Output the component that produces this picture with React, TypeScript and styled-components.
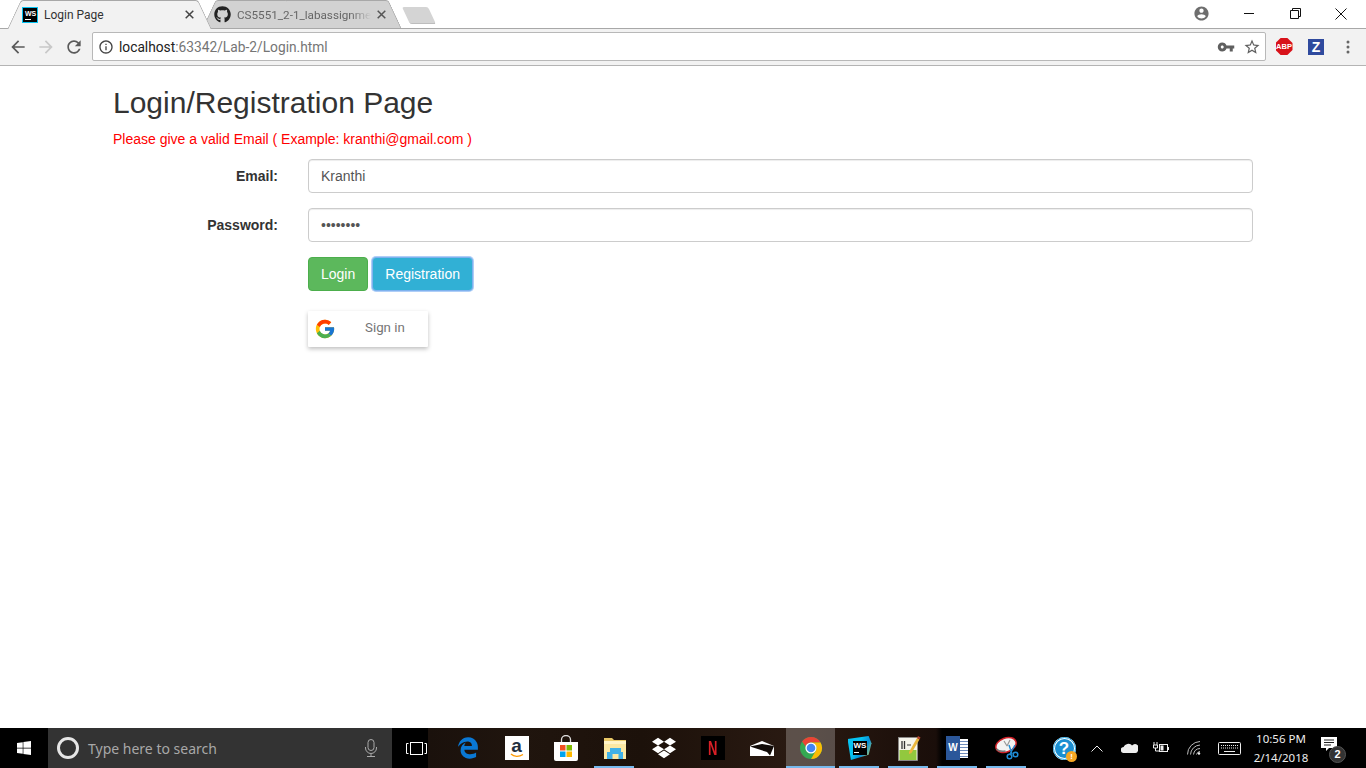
import React from 'react'
import styled, {createGlobalStyle} from 'styled-components'
import {FaDropbox, FaEdgeLegacy, FaGithub, FaWindows} from 'react-icons/fa'
import {FcGoogle} from 'react-icons/fc'

const GlobalStyle = createGlobalStyle`
  html, body {
    margin: 0;
    padding: 0;
    height: 100%;
    overflow: hidden;
    background: #fff;
  }
  * {
    box-sizing: border-box;
  }
`

const Screen = styled.div`
  width: 1366px;
  height: 768px;
  display: flex;
  flex-direction: column;
  font-family: 'Liberation Sans', Arial, sans-serif;
  color: #333;
`

/* browser chrome */
const TitleBar = styled.div`
  height: 29px;
  flex: none;
  display: flex;
  background: #fff;
  border-bottom: 1px solid #a8a8a8;
  padding-left: 14px;
  font-family: Roboto, sans-serif;
  font-size: 12px;
`

const Tab = styled.div<{$active?: boolean}>`
  position: relative;
  flex: none;
  width: ${p => (p.$active ? 191 : 186)}px;
  height: ${p => (p.$active ? 29 : 28)}px;
  margin-left: ${p => (p.$active ? 0 : 4)}px;
  padding: 0 ${p => (p.$active ? 11 : 12)}px 0 ${p => (p.$active ? 8 : 5)}px;
  display: flex;
  align-items: center;
  gap: 6px;
  color: ${p => (p.$active ? '#333' : '#666')};
  z-index: ${p => (p.$active ? 2 : 1)};

  &::before,
  &::after {
    content: '';
    position: absolute;
    top: 0;
    bottom: 0;
    width: 55%;
    z-index: -1;
    background: ${p => (p.$active ? '#f2f2f2' : '#d2d2d2')};
    border-top: 1px solid #a8a8a8;
  }
  &::before {
    left: 0;
    border-left: 1px solid #a8a8a8;
    border-top-left-radius: 3px;
    transform: skewX(-25deg);
  }
  &::after {
    right: 0;
    border-right: 1px solid #a8a8a8;
    border-top-right-radius: 3px;
    transform: skewX(25deg);
  }
`

const TabTitle = styled.span<{$fade?: boolean}>`
  flex: 1;
  white-space: nowrap;
  padding-top: 1px;
  line-height: 28px;
  ${p =>
    p.$fade &&
    `font-size: 11.7px;
     mask-image: linear-gradient(to right, #000 85%, transparent 100%);`}
`

const TabClose = styled.svg`
  width: 9px;
  height: 9px;
  flex: none;
`

const WsFavicon = styled.span`
  width: 16px;
  height: 16px;
  flex: none;
  background: #000;
  border: 1px solid #07c3f2;
  color: #fff;
  font: bold 7px/9px 'Liberation Sans', sans-serif;
  padding: 1px 0 0 2px;
  position: relative;

  &::after {
    content: '';
    position: absolute;
    left: 2px;
    bottom: 2px;
    width: 6px;
    height: 1px;
    background: #fff;
  }
`

const NewTab = styled.div`
  flex: none;
  width: 26px;
  height: 17px;
  margin: 7px 0 0 11px;
  background: #d4d4d4;
  border-bottom: 1px solid #bdbdbd;
  border-radius: 2px;
  transform: skewX(25deg);
`

const WindowControls = styled.div`
  margin-left: auto;
  display: flex;
  align-items: center;
  height: 27px;
  color: #111;
`

const WindowButton = styled.div<{$width: number}>`
  width: ${p => p.$width}px;
  height: 26px;
  display: flex;
  align-items: center;
  justify-content: center;
`

const Toolbar = styled.div`
  height: 37px;
  flex: none;
  display: flex;
  align-items: center;
  background: #f2f2f2;
  border-bottom: 1px solid #b4b4b4;
  padding: 0 0 1px 4px;
`

const NavButton = styled.div`
  width: 28px;
  height: 28px;
  flex: none;
  display: flex;
  align-items: center;
  justify-content: center;
`

const AddressBar = styled.div`
  width: 1174px;
  height: 29px;
  flex: none;
  margin: 0 2px 0 4px;
  display: flex;
  align-items: center;
  background: #fff;
  border: 1px solid #b8b8b8;
  border-radius: 2px;
  padding: 0 4px 0 5px;
  font-family: Roboto, sans-serif;
  font-size: 13.75px;
`

const UrlHost = styled.span`
  margin-left: 5px;
  color: #222;
`

const UrlPath = styled.span`
  color: #757575;
`

const AddressIcons = styled.div`
  margin-left: auto;
  display: flex;
  align-items: center;
  gap: 8px;
`

const ExtensionSlot = styled.div`
  width: 32px;
  height: 28px;
  flex: none;
  display: flex;
  align-items: center;
  justify-content: center;
`

const AbpBadge = styled.span`
  width: 17px;
  height: 17px;
  background: #d8121a;
  color: #fff;
  clip-path: polygon(30% 0, 70% 0, 100% 30%, 100% 70%, 70% 100%, 30% 100%, 0 70%, 0 30%);
  font: bold 7.5px/17px 'Liberation Sans', sans-serif;
  text-align: center;
`

const ZBadge = styled.span`
  width: 16px;
  height: 16px;
  background: #2f4a9e;
  color: #fff;
  font: bold 14px/16px 'Liberation Sans', sans-serif;
  text-align: center;
`

/* page content */
const Page = styled.main`
  flex: 1;
  background: #fff;
  padding: 20px 113px 0;
`

const Heading = styled.h1`
  margin: 0 0 10px;
  font-size: 30px;
  font-weight: 400;
  line-height: 33px;
  color: #333;
`

const ErrorText = styled.div`
  margin-bottom: 10px;
  font-size: 14px;
  line-height: 20px;
  color: #f00;
`

const FormRow = styled.div<{$gap?: number}>`
  display: grid;
  grid-template-columns: 165px 945px;
  column-gap: 30px;
  margin-bottom: ${p => p.$gap ?? 15}px;
`

const Label = styled.label`
  font-size: 14px;
  font-weight: 700;
  line-height: 20px;
  padding-top: 7px;
  text-align: right;
  color: #333;
`

const Input = styled.input`
  width: 100%;
  height: 34px;
  padding: 6px 12px;
  background: #fff;
  border: 1px solid #ccc;
  border-radius: 4px;
  box-shadow: inset 0 1px 1px rgba(0, 0, 0, 0.075);
  font-family: 'Liberation Sans', Arial, sans-serif;
  font-size: 14px;
  color: #555;
  outline: none;
`

const ButtonRow = styled.div`
  grid-column: 2;
  display: flex;
  gap: 4px;
`

const Button = styled.button<{$color: string; $edge: string; $focused?: boolean}>`
  height: 34px;
  padding: 6px 12px;
  background: ${p => p.$color};
  border: 1px solid ${p => p.$edge};
  border-radius: 4px;
  box-shadow: ${p => (p.$focused ? '0 0 0 1px rgba(110, 165, 240, 0.55)' : 'none')};
  color: #fff;
  font-family: 'Liberation Sans', Arial, sans-serif;
  font-size: 14px;
  line-height: 20px;
`

const GoogleButton = styled.button`
  grid-column: 2;
  width: 120px;
  height: 36px;
  display: flex;
  align-items: center;
  padding: 0 0 1px 6px;
  background: #fff;
  border: none;
  border-radius: 1px;
  box-shadow: 0 2px 4px rgba(0, 0, 0, 0.25);
  color: #757575;
  font-family: Roboto, sans-serif;
  font-size: 13.3px;
  font-weight: 400;
`

const GoogleLabel = styled.span`
  margin: 0 0 3px 29px;
`

/* windows taskbar */
const Taskbar = styled.footer`
  height: 40px;
  flex: none;
  display: flex;
  background: #000;
  font-family: 'Noto Sans', sans-serif;
`

const StartButton = styled.div`
  width: 48px;
  display: flex;
  align-items: center;
  justify-content: center;
  color: #fff;
`

const SearchBox = styled.div`
  width: 344px;
  display: flex;
  align-items: center;
  background: #333;
  padding: 0 14px 0 9px;
  color: #a8a8a8;
  font-size: 14px;
`

const CortanaRing = styled.span`
  width: 22px;
  height: 22px;
  border: 3px solid #e6e6e6;
  border-radius: 50%;
  margin-right: 9px;
`

const TaskView = styled.div`
  width: 36px;
  padding-left: 12px;
  display: flex;
  align-items: center;
  justify-content: center;
`

const AppStrip = styled.div`
  width: 612px;
  display: flex;
  padding-left: 15px;
  background: linear-gradient(
    to right,
    #1a110c 0,
    #20150e 15%,
    #1c110a 35%,
    #2a1a12 60%,
    #1d100b 78%,
    #1a0e0a 83%,
    #000 84%
  );
`

const AppSlot = styled.div<{$open?: boolean; $current?: boolean}>`
  position: relative;
  width: 49px;
  flex: none;
  display: flex;
  align-items: center;
  justify-content: center;
  background: ${p => (p.$current ? 'rgba(255,255,255,0.24)' : 'transparent')};

  &::after {
    content: '';
    display: ${p => (p.$open ? 'block' : 'none')};
    position: absolute;
    bottom: 0;
    left: ${p => (p.$current ? 0 : 4)}px;
    right: ${p => (p.$current ? 0 : 5)}px;
    height: 2px;
    background: #76b9ed;
  }
`

const AmazonTile = styled.span`
  position: relative;
  width: 24px;
  height: 24px;
  display: flex;
  justify-content: center;
  background: #fff;
  color: #232f3e;
  font: bold 19px/20px 'Liberation Sans', sans-serif;
`

const AmazonSmile = styled.svg`
  position: absolute;
  left: 5px;
  bottom: 2px;
`

const NetflixTile = styled.span`
  width: 24px;
  height: 24px;
  display: flex;
  align-items: center;
  justify-content: center;
  background: #000;
  color: #d81f26;
`

const NetflixLetter = styled.span`
  font: bold 21px/24px 'Liberation Sans', sans-serif;
  transform: scaleX(0.62);
`

const WsLogo = styled.span`
  width: 24px;
  height: 24px;
  display: flex;
  align-items: center;
  justify-content: center;
  background: linear-gradient(120deg, #07c3f2 40%, #078fd8 62%, #e8e24a 100%);
  clip-path: polygon(0 12%, 88% 0, 100% 30%, 88% 78%, 14% 100%);
`

const WsBox = styled.span`
  position: relative;
  width: 14px;
  height: 14px;
  background: #000;
  color: #fff;
  font: bold 8px/9px 'Liberation Sans', sans-serif;
  padding-left: 1px;

  &::after {
    content: '';
    position: absolute;
    left: 1px;
    bottom: 2px;
    width: 5px;
    height: 1px;
    background: #fff;
  }
`

const WordDoc = styled.span`
  width: 23px;
  height: 24px;
  display: flex;
  align-items: center;
`

const WordCover = styled.span`
  width: 14px;
  height: 24px;
  background: #2b579a;
  color: #fff;
  font: bold 10px/24px 'Liberation Sans', sans-serif;
  text-align: center;
`

const WordPage = styled.span`
  width: 8px;
  height: 19px;
  background: repeating-linear-gradient(#fff 0 2px, #6f8cbb 2px 3px);
`

const Tray = styled.div`
  flex: 1;
  display: flex;
  color: #fff;
`

const TraySlot = styled.div<{$width: number; $left?: number}>`
  position: relative;
  width: ${p => p.$width}px;
  margin-left: ${p => p.$left ?? 0}px;
  flex: none;
  display: flex;
  align-items: center;
  justify-content: center;
`

const Clock = styled.div`
  width: 66px;
  flex: none;
  text-align: center;
  font-size: 11.5px;
  line-height: 19px;
  color: #eee;
  padding-top: 1px;
`

const HelpBadge = styled.span`
  position: absolute;
  right: 11px;
  bottom: 6px;
  width: 11px;
  height: 11px;
  background: #f5a623;
  border-radius: 50%;
  color: #fff;
  font: bold 8px/11px 'Liberation Sans', sans-serif;
  text-align: center;
`

const HelpCircle = styled.span`
  width: 23px;
  height: 23px;
  background: #1b8fd2;
  border: 2px solid #fff;
  outline: 1px solid #1ba1e2;
  outline-offset: -1px;
  border-radius: 50%;
  color: #fff;
  font: bold 17px/19px 'Liberation Sans', sans-serif;
  text-align: center;
`

const NotifyCount = styled.span`
  position: absolute;
  right: 6px;
  bottom: 5px;
  width: 17px;
  height: 17px;
  background: #333;
  border: 1px solid #555;
  border-radius: 50%;
  color: #fff;
  font: bold 11px/15px 'Liberation Sans', sans-serif;
  text-align: center;
`

const CloseGlyph = ({color = '#444'}: {color?: string}) => (
  <TabClose viewBox='0 0 9 9'>
    <path d='M.7.7l7.6 7.6M8.3.7L.7 8.3' stroke={color} strokeWidth='1.5' fill='none' />
  </TabClose>
)

const MaterialIcon = ({d, size = 20, color = '#5a5a5a'}: {d: string; size?: number; color?: string}) => (
  <svg width={size} height={size} viewBox='0 0 24 24' fill={color}>
    <path d={d} />
  </svg>
)

const ARROW_LEFT = 'M20 11H7.83l5.59-5.59L12 4l-8 8 8 8 1.41-1.41L7.83 13H20v-2z'
const ARROW_RIGHT = 'M12 4l-1.41 1.41L16.17 11H4v2h12.17l-5.58 5.59L12 20l8-8z'
const RELOAD =
  'M17.65 6.35C16.2 4.9 14.21 4 12 4c-4.42 0-7.99 3.58-7.99 8s3.57 8 7.99 8c3.73 0 6.84-2.55 7.73-6h-2.08c-.82 2.33-3.04 4-5.65 4-3.31 0-6-2.69-6-6s2.69-6 6-6c1.66 0 3.14.69 4.22 1.78L13 11h7V4l-2.35 2.35z'
const INFO =
  'M11 7h2v2h-2zm0 4h2v6h-2zm1-9C6.48 2 2 6.48 2 12s4.48 10 10 10 10-4.48 10-10S17.52 2 12 2zm0 18c-4.41 0-8-3.59-8-8s3.59-8 8-8 8 3.59 8 8-3.59 8-8 8z'
const KEY =
  'M12.65 10C11.83 7.67 9.61 6 7 6c-3.31 0-6 2.69-6 6s2.69 6 6 6c2.61 0 4.83-1.67 5.65-4H17v4h4v-4h2v-4H12.65zM7 14c-1.1 0-2-.9-2-2s.9-2 2-2 2 .9 2 2-.9 2-2 2z'
const STAR =
  'M22 9.24l-7.19-.62L12 2 9.19 8.63 2 9.24l5.46 4.73L5.82 21 12 17.27 18.18 21l-1.63-7.03L22 9.24zM12 15.4l-3.76 2.27 1-4.28-3.32-2.88 4.38-.38L12 6.1l1.71 4.04 4.38.38-3.32 2.88 1 4.28L12 15.4z'
const ACCOUNT =
  'M12 2C6.48 2 2 6.48 2 12s4.48 10 10 10 10-4.48 10-10S17.52 2 12 2zm0 3c1.66 0 3 1.34 3 3s-1.34 3-3 3-3-1.34-3-3 1.34-3 3-3zm0 14.2c-2.5 0-4.71-1.28-6-3.22.03-1.99 4-3.08 6-3.08 1.99 0 5.97 1.09 6 3.08-1.29 1.94-3.5 3.22-6 3.22z'

const StoreIcon = () => (
  <svg width='24' height='26' viewBox='0 0 24 26'>
    <path d='M7.5 7V4.5a4.5 4 0 0 1 9 0V7' fill='none' stroke='#ddd' strokeWidth='1.3' />
    <path d='M0 7h24v17a2 2 0 0 1-2 2H2a2 2 0 0 1-2-2z' fill='#fff' />
    <rect x='6' y='10' width='5.5' height='5.5' fill='#f25022' />
    <rect x='12.5' y='10' width='5.5' height='5.5' fill='#7fba00' />
    <rect x='6' y='16.5' width='5.5' height='5.5' fill='#00a4ef' />
    <rect x='12.5' y='16.5' width='5.5' height='5.5' fill='#ffb900' />
  </svg>
)

const FolderIcon = () => (
  <svg width='24' height='22' viewBox='0 0 24 22'>
    <path d='M1 1h8l2 2h12v19H1z' fill='#e9c867' />
    <rect x='1' y='4' width='22' height='3' fill='#fff4c7' />
    <rect x='1' y='7' width='22' height='15' fill='#fbe8a3' />
    <rect x='4' y='15' width='16' height='7' fill='#3fb1e8' />
    <rect x='7' y='11' width='11' height='4' fill='#3fb1e8' />
    <rect x='9.5' y='17' width='6' height='5' fill='#fbe8a3' />
  </svg>
)

const MailIcon = () => (
  <svg width='24' height='15' viewBox='0 0 24 15'>
    <path d='M0 5L12 0l12 5v10H0z' fill='#fff' />
    <path d='M0 5.5L12 3l12 2-4 9.5-3-3.500z' fill='#120b08' />
  </svg>
)

const ChromeIcon = () => (
  <svg width='24' height='24' viewBox='0 0 24 24'>
    <circle cx='12' cy='12' r='11' fill='#34a853' />
    <path d='M12 1a11 11 0 0 1 9.53 5.5H12a5.5 5.5 0 0 0-5.3 4.1L3.1 5.5A11 11 0 0 1 12 1z' fill='#ea4335' />
    <path d='M21.53 6.5A11 11 0 0 1 12 23l4.8-8.2A5.5 5.5 0 0 0 12 6.5z' fill='#fbbc05' />
    <circle cx='12' cy='12' r='5.6' fill='#fff' />
    <circle cx='12' cy='12' r='4.3' fill='#4285f4' />
  </svg>
)

const NotepadIcon = () => (
  <svg width='24' height='26' viewBox='0 0 24 26'>
    <rect x='1.5' y='2.5' width='19' height='23' fill='#f4f4ec' stroke='#8a8a8a' strokeWidth='.8' />
    <rect x='2.5' y='15' width='17' height='10' fill='#92c83e' />
    <path d='M5 6v8M7.5 6v8' stroke='#333' strokeWidth='1.3' />
    <path d='M10 10h4' stroke='#555' strokeWidth='1.2' />
    <path d='M12 17L20 3l2.5 1.5L14.5 18l-2.5 1z' fill='#e9b53c' />
    <path d='M20 3l1-2 2.5 1.5-1 2z' fill='#b8462f' />
  </svg>
)

const SnipIcon = () => (
  <svg width='24' height='24' viewBox='0 0 24 24'>
    <ellipse cx='11' cy='9' rx='10.5' ry='7' fill='#f3f3f3' stroke='#d2232a' strokeWidth='1.5' transform='rotate(-20 11 9)' />
    <path d='M1.5 13a10.5 7 -20 0 0 9 2' fill='none' stroke='#777' strokeWidth='1.5' />
    <path d='M9 5l3 5M15 4l-3 6' stroke='#999' strokeWidth='1.2' />
    <path d='M14 9l3 9M20 9l-5 9' stroke='#1f8dd6' strokeWidth='1.4' />
    <circle cx='14.5' cy='20.5' r='2.3' fill='none' stroke='#1f8dd6' strokeWidth='1.5' />
    <circle cx='20.5' cy='18.5' r='2.3' fill='none' stroke='#1f8dd6' strokeWidth='1.5' />
  </svg>
)

const App = () => (
  <Screen>
    <GlobalStyle />
    <TitleBar>
      <Tab $active>
        <WsFavicon>WS</WsFavicon>
        <TabTitle>Login Page</TabTitle>
        <CloseGlyph />
      </Tab>
      <Tab>
        <FaGithub size={17} color='#222' style={{flex: 'none'}} />
        <TabTitle $fade>CS5551_2-1_labassignme</TabTitle>
        <CloseGlyph color='#555' />
      </Tab>
      <NewTab />
      <WindowControls>
        <WindowButton $width={46}>
          <MaterialIcon d={ACCOUNT} size={17} color='#6e6e6e' />
        </WindowButton>
        <WindowButton $width={50}>
          <svg width='11' height='11' viewBox='0 0 11 11'>
            <path d='M0 5.5h10' stroke='#111' />
          </svg>
        </WindowButton>
        <WindowButton $width={42}>
          <svg width='11' height='11' viewBox='0 0 11 11' fill='none' stroke='#111'>
            <path d='M.5 2.5h8v8h-8zM2.5 2.5v-2h8v8h-2' />
          </svg>
        </WindowButton>
        <WindowButton $width={50}>
          <svg width='12' height='12' viewBox='0 0 12 12' stroke='#111'>
            <path d='M.5.5l11 11M11.5.5l-11 11' />
          </svg>
        </WindowButton>
      </WindowControls>
    </TitleBar>
    <Toolbar>
      <NavButton>
        <MaterialIcon d={ARROW_LEFT} />
      </NavButton>
      <NavButton>
        <MaterialIcon d={ARROW_RIGHT} color='#c8c8c8' />
      </NavButton>
      <NavButton>
        <MaterialIcon d={RELOAD} />
      </NavButton>
      <AddressBar>
        <MaterialIcon d={INFO} size={16} color='#444' />
        <UrlHost>
          localhost<UrlPath>:63342/Lab-2/Login.html</UrlPath>
        </UrlHost>
        <AddressIcons>
          <MaterialIcon d={KEY} size={18} color='#5f5f5f' />
          <MaterialIcon d={STAR} size={18} color='#5f5f5f' />
        </AddressIcons>
      </AddressBar>
      <ExtensionSlot>
        <AbpBadge>ABP</AbpBadge>
      </ExtensionSlot>
      <ExtensionSlot>
        <ZBadge>Z</ZBadge>
      </ExtensionSlot>
      <ExtensionSlot>
        <svg width='4' height='14' viewBox='0 0 4 14' fill='#666'>
          <circle cx='2' cy='2' r='1.5' />
          <circle cx='2' cy='7' r='1.5' />
          <circle cx='2' cy='12' r='1.5' />
        </svg>
      </ExtensionSlot>
    </Toolbar>

    <Page>
      <Heading>Login/Registration Page</Heading>
      <ErrorText>Please give a valid Email ( Example: kranthi@gmail.com )</ErrorText>
      <FormRow>
        <Label>Email:</Label>
        <Input type='text' defaultValue='Kranthi' />
      </FormRow>
      <FormRow>
        <Label>Password:</Label>
        <Input type='password' defaultValue='kranthi1' />
      </FormRow>
      <FormRow $gap={20}>
        <ButtonRow>
          <Button $color='#5cb85c' $edge='#4cae4c'>Login</Button>
          <Button $color='#31b0d5' $edge='#7fb2ee' $focused>Registration</Button>
        </ButtonRow>
      </FormRow>
      <FormRow>
        <GoogleButton>
          <FcGoogle size={22} />
          <GoogleLabel>Sign in</GoogleLabel>
        </GoogleButton>
      </FormRow>
    </Page>

    <Taskbar>
      <StartButton>
        <FaWindows size={16} />
      </StartButton>
      <SearchBox>
        <CortanaRing />
        Type here to search
        <svg width='14' height='18' viewBox='0 0 14 18' fill='none' stroke='#aaa' style={{marginLeft: 'auto'}}>
          <rect x='4' y='.5' width='6' height='11' rx='3' />
          <path d='M1.5 8v1a5.5 5.5 0 0 0 11 0V8M7 15v2M3 17.5h8' />
        </svg>
      </SearchBox>
      <TaskView>
        <svg width='21' height='13' viewBox='0 0 21 13' fill='none' stroke='#fff'>
          <rect x='4.5' y='.5' width='12' height='12' />
          <path d='M2.5 1.5h-2v10h2M18.5 1.5h2v10h-2' />
        </svg>
      </TaskView>
      <AppStrip>
        <AppSlot>
          <FaEdgeLegacy size={22} color='#0a78d4' />
        </AppSlot>
        <AppSlot>
          <AmazonTile>
            a
            <AmazonSmile width='14' height='5' viewBox='0 0 14 5' fill='none' stroke='#f90' strokeWidth='1.3'>
              <path d='M1 1c3 3 8 3 12 .5' />
            </AmazonSmile>
          </AmazonTile>
        </AppSlot>
        <AppSlot>
          <StoreIcon />
        </AppSlot>
        <AppSlot $open>
          <FolderIcon />
        </AppSlot>
        <AppSlot>
          <FaDropbox size={24} color='#fff' />
        </AppSlot>
        <AppSlot>
          <NetflixTile>
            <NetflixLetter>N</NetflixLetter>
          </NetflixTile>
        </AppSlot>
        <AppSlot>
          <MailIcon />
        </AppSlot>
        <AppSlot $open $current>
          <ChromeIcon />
        </AppSlot>
        <AppSlot $open>
          <WsLogo>
            <WsBox>WS</WsBox>
          </WsLogo>
        </AppSlot>
        <AppSlot $open>
          <NotepadIcon />
        </AppSlot>
        <AppSlot $open>
          <WordDoc>
            <WordCover>W</WordCover>
            <WordPage />
          </WordDoc>
        </AppSlot>
        <AppSlot $open>
          <SnipIcon />
        </AppSlot>
      </AppStrip>
      <Tray>
        <TraySlot $width={48}>
          <HelpCircle>?</HelpCircle>
          <HelpBadge>!</HelpBadge>
        </TraySlot>
        <TraySlot $width={18}>
          <svg width='12' height='7' viewBox='0 0 12 7' fill='none' stroke='#eee'>
            <path d='M.5 6.5L6 1l5.5 5.5' />
          </svg>
        </TraySlot>
        <TraySlot $width={32} $left={7}>
          <svg width='17' height='10' viewBox='0 0 17 10' fill='#eee'>
            <path d='M3 10a3 3 0 0 1-.4-6A5 5 0 0 1 11 2.5 3.8 3.8 0 0 1 16.9 8 2.5 2.5 0 0 1 14.5 10z' />
          </svg>
        </TraySlot>
        <TraySlot $width={32}>
          <svg width='16' height='12' viewBox='0 0 16 12' fill='none' stroke='#eee'>
            <path d='M1 0v3M4 0v3M.5 3h4v3H.5zM2.5 6v3h4' />
            <rect x='6.5' y='2.5' width='8' height='7' />
            <rect x='7.5' y='3.5' width='3' height='5' fill='#eee' stroke='none' />
            <path d='M15.5 5v3' />
          </svg>
        </TraySlot>
        <TraySlot $width={32} $left={1}>
          <svg width='14' height='14' viewBox='0 0 14 14' fill='none' stroke='#bbb'>
            <path d='M.5 13.5A13 13 0 0 1 13 .5M3.5 13.5A10 10 0 0 1 13 4M6.5 13.5A7 7 0 0 1 13 7.5M9.5 13.5A4 4 0 0 1 13 10.5' />
            <circle cx='12' cy='12.5' r='1.2' fill='#eee' stroke='none' />
          </svg>
        </TraySlot>
        <TraySlot $width={38}>
          <svg width='23' height='13' viewBox='0 0 23 13' fill='none' stroke='#eee'>
            <rect x='.5' y='.5' width='22' height='12' rx='1' />
            <path d='M3 3.5h17M3 6h17' strokeDasharray='1 1' />
            <path d='M6 9.5h11' />
          </svg>
        </TraySlot>
        <Clock>
          10:56 PM
          <br />
          2/14/2018
        </Clock>
        <TraySlot $width={38}>
          <svg width='16' height='15' viewBox='0 0 16 15' style={{transform: 'translate(-4px,-4px)'}}>
            <path d='M0 0h16v11H8l-3 3v-3H0z' fill='#fff' />
            <path d='M3 3h10M3 5.5h10M3 8h7' stroke='#222' />
          </svg>
          <NotifyCount>2</NotifyCount>
        </TraySlot>
      </Tray>
    </Taskbar>
  </Screen>
)

export default App
